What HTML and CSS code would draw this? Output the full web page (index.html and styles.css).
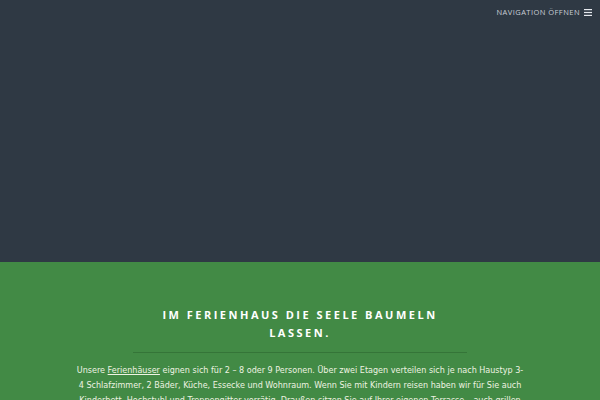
FILE: index.html
```html
<!DOCTYPE html>
<html lang="de">
<head>
<meta charset="utf-8">
<link rel="stylesheet" href="styles.css">
</head>
<body>
<header class="hero">
  <nav class="nav">
    <span class="nav-label">Navigation öffnen</span>
    <svg class="burger" width="8" height="7" viewBox="0 0 8 7"><rect x="0" y="0" width="8" height="1.2" fill="#e6e9ee"/><rect x="0" y="2.9" width="8" height="1.2" fill="#e6e9ee"/><rect x="0" y="5.8" width="8" height="1.2" fill="#e6e9ee"/></svg>
  </nav>
</header>
<section class="intro">
  <div class="intro-head">
    <h1 class="title">Im Ferienhaus die Seele baumeln lassen.</h1>
    <hr class="rule">
  </div>
  <p class="text">Unsere <a class="link" href="#">Ferienhäuser</a> eignen sich für 2 – 8 oder 9 Personen. Über zwei Etagen verteilen sich je nach Haustyp 3-<wbr>4 Schlafzimmer, 2 Bäder, Küche, Essecke und Wohnraum. Wenn Sie mit Kindern reisen haben wir für Sie auch Kinderbett, Hochstuhl und Treppengitter vorrätig. Draußen sitzen Sie auf Ihrer eigenen Terrasse – auch grillen ist möglich.</p>
</section>
</body>
</html>
```
FILE: styles.css
```css
html, body {
  margin: 0;
  padding: 0;
}
body {
  width: 600px;
  height: 400px;
  overflow: hidden;
  background: #428a45;
  font-family: "DejaVu Sans", sans-serif;
}
.hero {
  height: 262px;
  background: #2f3944;
  display: flex;
  flex-direction: column;
}
.nav {
  display: flex;
  justify-content: flex-end;
  align-items: center;
  gap: 4px;
  padding: 7px 8px 0 0;
}
.nav-label {
  font-family: "Open Sans", sans-serif;
  font-size: 7.5px;
  letter-spacing: 0.45px;
  text-transform: uppercase;
  color: #c9ced6;
}
.burger {
  display: block;
}
.intro {
  display: flex;
  flex-direction: column;
  align-items: center;
  padding-top: 44px;
}
.intro-head {
  width: 334px;
  display: flex;
  flex-direction: column;
  align-items: center;
}
.title {
  margin: 0;
  font-family: "Open Sans", sans-serif;
  font-weight: 700;
  font-size: 11px;
  line-height: 18px;
  letter-spacing: 2.5px;
  text-transform: uppercase;
  text-align: center;
  color: #ffffff;
}
.rule {
  width: 100%;
  margin: 10px 0 0 0;
  border: 0;
  border-top: 1px solid #357538;
  height: 0;
}
.text {
  width: 448px;
  margin: 10px 0 0 0;
  font-size: 8.05px;
  line-height: 15px;
  text-align: center;
  color: #eef3e2;
}
.link {
  color: #eef3e2;
  text-decoration: underline;
  text-underline-offset: 1px;
}
```
